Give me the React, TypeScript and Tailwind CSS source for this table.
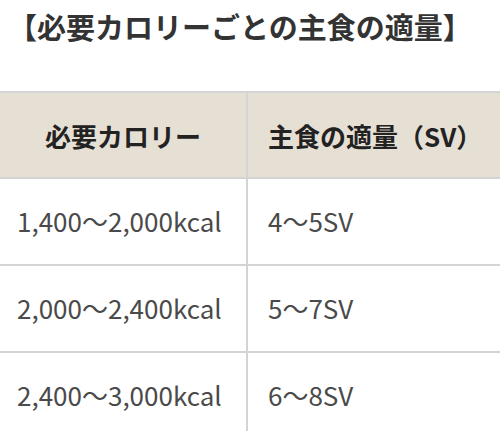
import React from "react";

const rows = [
  ["1,400〜2,000kcal", "4〜5SV"],
  ["2,000〜2,400kcal", "5〜7SV"],
  ["2,400〜3,000kcal", "6〜8SV"],
];

export default function App() {
  return (
    <div
      className="w-[500px] h-[431px] overflow-hidden bg-white"
      style={{ fontFamily: '"Noto Sans CJK JP", "Noto Sans", sans-serif' }}
    >
      <h2 className="h-[91px] pl-[8px] pt-[6px] text-[29px] font-bold leading-[40px] text-[#333]">
        【必要カロリーごとの主食の適量】
      </h2>
      <div className="border-t-2 border-[#d4d4d4]">
        <div className="grid grid-cols-[248px_1fr] bg-[#e6dfd4] border-b-2 border-[#d4d4d4] h-[86px]">
          <div className="flex items-center justify-center border-r-2 border-[#d4d4d4] text-[26px] font-bold text-[#222]">
            必要カロリー
          </div>
          <div className="flex items-center pl-[20px] text-[26px] font-bold text-[#222]">
            主食の適量（SV）
          </div>
        </div>
        {rows.map((r, i) => (
          <div
            key={i}
            className="grid grid-cols-[248px_1fr] border-b-2 border-[#d4d4d4] h-[87px]"
          >
            <div className="flex items-center pl-[17px] pb-[2px] border-r-2 border-[#d4d4d4] text-[26px] text-[#4a4a4a]">
              {r[0]}
            </div>
            <div className="flex items-center pl-[20px] pb-[2px] text-[26px] text-[#4a4a4a]">
              {r[1]}
            </div>
          </div>
        ))}
      </div>
    </div>
  );
}
